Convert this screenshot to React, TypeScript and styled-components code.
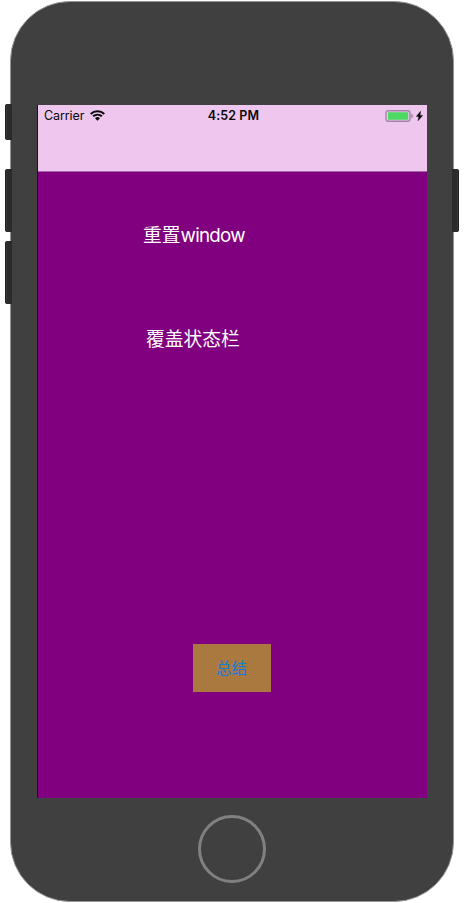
import React from 'react';
import styled, { createGlobalStyle } from 'styled-components';

const GlobalStyle = createGlobalStyle`
  * { box-sizing: border-box; }
  body { margin: 0; background: #fff; overflow: hidden; }
`;

const Stage = styled.main`
  width: 464px;
  height: 903px;
  padding: 1px 0 0 10px;
  background: #fff;
  font-family: Inter, 'Noto Sans CJK SC', sans-serif;
`;

const Phone = styled.div`
  position: relative;
  display: flex;
  flex-direction: column;
  width: 444px;
  height: 901px;
  padding: 103px 26px 0;
  border: 1px solid #969696;
  border-radius: 60px;
  background: #404040;
`;

const SideKey = styled.span<{ $side: 'left' | 'right'; $top: number; $height: number }>`
  position: absolute;
  ${(p) => p.$side}: -6px;
  top: ${(p) => p.$top}px;
  width: 7px;
  height: ${(p) => p.$height}px;
  border-radius: ${(p) => (p.$side === 'left' ? '3px 0 0 3px' : '0 3px 3px 0')};
  background: #2b2b2b;
  box-shadow: inset ${(p) => (p.$side === 'left' ? '1px' : '-1px')} 0 0 #202020,
    inset ${(p) => (p.$side === 'left' ? '2px' : '-2px')} 0 0 #383838;
`;

const Screen = styled.section`
  display: flex;
  flex-direction: column;
  width: 390px;
  height: 693px;
  flex: none;
  border-left: 1px solid #151515;
  background: #800080;
`;

const NavigationBar = styled.header`
  height: 67px;
  flex: none;
  background: #eec6ee;
  border-bottom: 1px solid #a365a3;
`;

const StatusBar = styled.div`
  display: grid;
  grid-template-columns: 1fr auto 1fr;
  align-items: center;
  height: 21px;
  padding: 0 4px 0 6px;
  color: #080808;
  font-size: 12.5px;
  line-height: 20px;
`;

const Carrier = styled.div`
  display: flex;
  align-items: center;
  gap: 6px;
  letter-spacing: -0.1px;
`;

const Clock = styled.time`
  font-weight: 600;
  letter-spacing: 0.08px;
`;

const Power = styled.div`
  display: flex;
  justify-content: flex-end;
  align-items: center;
  gap: 2px;
`;

const Content = styled.div`
  display: flex;
  flex: 1;
  flex-direction: column;
  padding-top: 48px;
`;

const Action = styled.button<{ $left: number; $gap?: number }>`
  align-self: flex-start;
  height: 32px;
  margin: ${(p) => p.$gap ?? 0}px 0 0 ${(p) => p.$left}px;
  padding: 0;
  border: 0;
  background: none;
  color: #fff;
  font: 400 18.8px/32px Inter, 'Noto Sans CJK SC', sans-serif;
  white-space: nowrap;
`;

const LatinWord = styled.span`
  letter-spacing: -0.75px;
`;

const SummaryButton = styled.button`
  width: 78px;
  height: 48px;
  margin: 288px 0 0 155px;
  padding: 0 1px 2px 0;
  border: 0;
  background: #a97940;
  color: #127bdc;
  font: 400 15.5px/46px 'Noto Sans CJK SC', sans-serif;
`;

const HomeButton = styled.div`
  width: 68px;
  height: 68px;
  flex: none;
  margin: 17px 0 0 161px;
  border: 3px solid #818181;
  border-radius: 50%;
`;

const Wifi = () => (
  <svg width="15" height="11" viewBox="0 0 15 11" fill="none" stroke="#080808" strokeWidth="2">
    <path d="M.7 3.9C4.5.3 10.5.3 14.3 3.9" />
    <path d="M3.1 6.3c2.5-2.2 6.3-2.2 8.8 0" />
    <path d="m5 8.2 2.5 2.5L10 8.2a3.8 3.8 0 0 0-5 0Z" fill="#080808" stroke="none" />
  </svg>
);

const Battery = () => (
  <svg width="29" height="12" viewBox="0 0 29 12">
    <rect x="1" y=".7" width="24" height="10.6" rx="2.2" fill="none" stroke="#a486a4" strokeWidth="1.4" />
    <rect x="3" y="2.2" width="20.2" height="7.6" rx=".5" fill="#4cd964" />
    <path d="M26.3 4c2 .4 2 3.6 0 4Z" fill="#a486a4" stroke="#a486a4" strokeWidth=".4" />
  </svg>
);

const Bolt = () => (
  <svg width="7" height="10" viewBox="0 0 7 10" fill="#080808">
    <path d="M4.6.2.3 5.5h2.5L2 9.8l4.7-5.4H4.1Z" stroke="#080808" strokeWidth=".4" />
  </svg>
);

export default function App() {
  return (
    <>
      <GlobalStyle />
      <Stage>
        <Phone>
          <SideKey $side="left" $top={102} $height={36} />
          <SideKey $side="left" $top={167} $height={63} />
          <SideKey $side="left" $top={239} $height={63} />
          <SideKey $side="right" $top={167} $height={63} />
          <Screen>
            <NavigationBar>
              <StatusBar>
                <Carrier>
                  Carrier
                  <Wifi />
                </Carrier>
                <Clock>4:52 PM</Clock>
                <Power>
                  <Battery />
                  <Bolt />
                </Power>
              </StatusBar>
            </NavigationBar>
            <Content>
              <Action $left={105}>
                重置<LatinWord>window</LatinWord>
              </Action>
              <Action $left={108} $gap={72}>覆盖状态栏</Action>
              <SummaryButton>总结</SummaryButton>
            </Content>
          </Screen>
          <HomeButton />
        </Phone>
      </Stage>
    </>
  );
}
